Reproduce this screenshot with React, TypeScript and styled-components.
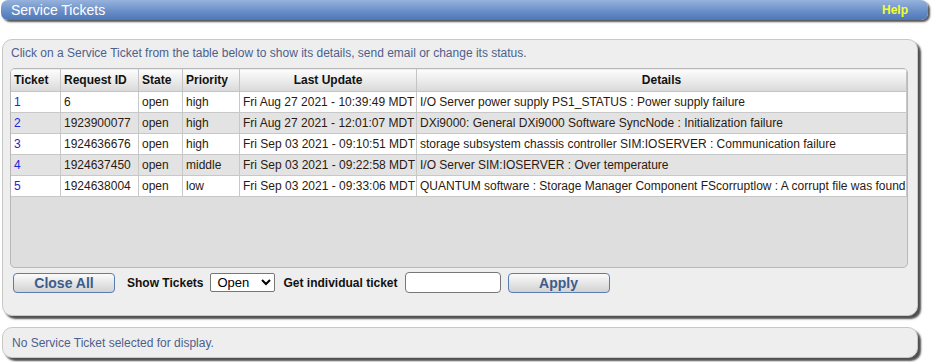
import React from 'react';
import styled, { createGlobalStyle } from 'styled-components';

const GlobalStyle = createGlobalStyle`
    body {
        margin: 0;
        background: #fff;
        font-family: "Liberation Sans", Arial, sans-serif;
        font-size: 12px;
    }
`;

const Page = styled.div`
    width: 932px;
    height: 362px;
    overflow: hidden;
    padding: 0 4px 0 1px;
    box-sizing: border-box;
`;

const TitleBar = styled.div`
    height: 20px;
    display: flex;
    align-items: center;
    justify-content: space-between;
    padding: 0 20px 0 10px;
    border-radius: 7px;
    background: linear-gradient(#97b3dc, #6a8fc8 55%, #4d77b6);
    box-shadow: 2px 2px 2px #555;
    color: #fff;
`;

const Title = styled.span`
    font-size: 14px;
`;

const HelpLink = styled.a`
    font-size: 12px;
    font-weight: bold;
    color: #f0ff30;
    text-decoration: none;
`;

const Panel = styled.div<{ $compact?: boolean }>`
    margin: ${p => (p.$compact ? '11px' : '19px')} 0 0 1px;
    width: 916px;
    box-sizing: border-box;
    background: #eeeeee;
    border: 1px solid #c8c8c8;
    border-radius: 10px;
    box-shadow: 3px 3px 2px #505050;
    padding: ${p => (p.$compact ? '8px 8px 7px' : '6px 7px 0')};
    height: ${p => (p.$compact ? '31px' : '277px')};
`;

const Note = styled.div`
    color: #4d5f8c;
    font-size: 12px;
    line-height: 15px;
    padding-left: 1px;
`;

const TableBox = styled.div`
    margin-top: 7px;
    width: 898px;
    height: 200px;
    box-sizing: border-box;
    border: 1px solid #b8b8b8;
    border-radius: 5px;
    background: #dedede;
    overflow: hidden;
`;

const Grid = styled.table`
    border-collapse: collapse;
    table-layout: fixed;
    width: 897px;
    margin: -1px 0 0 -1px;
`;

const HeadCell = styled.th<{ $w?: number; $center?: boolean }>`
    width: ${p => (p.$w ? `${p.$w - 7}px` : 'auto')};
    height: 22px;
    padding: 0 3px;
    text-align: ${p => (p.$center ? 'center' : 'left')};
    font-weight: bold;
    font-size: 12px;
    color: #111;
    background: linear-gradient(#fdfdfd, #e8e8e8 60%, #d8d8d8);
    border: 1px solid #c4c4c4;
    white-space: nowrap;
`;

const Row = styled.tr<{ $alt: boolean }>`
    background: ${p => (p.$alt ? '#e3e3e3' : '#ffffff')};
`;

const Cell = styled.td<{ $link?: boolean }>`
    height: 20px;
    padding: 0 3px;
    border: 1px solid #c8c8c8;
    font-size: 12px;
    color: ${p => (p.$link ? '#2424d6' : '#2a1a10')};
    white-space: nowrap;
    overflow: hidden;
`;

const Controls = styled.div`
    display: flex;
    align-items: center;
    margin-top: 4px;
    padding-left: 3px;
    height: 21px;
`;

const Button = styled.button`
    width: 102px;
    height: 20px;
    padding: 0;
    border: 1px solid #5a7db0;
    border-radius: 4px;
    background: linear-gradient(#fbfbfb, #e4e4e4 55%, #d2d2d2);
    color: #3d5b8c;
    font-family: "Liberation Sans", Arial, sans-serif;
    font-size: 14px;
    font-weight: bold;
`;

const Label = styled.span<{ $gap: number }>`
    font-weight: bold;
    font-size: 12px;
    color: #111;
    margin: 0 7px 0 ${p => p.$gap}px;
`;

const Select = styled.select`
    width: 65px;
    height: 19px;
    font-family: Arial, "Liberation Sans", sans-serif;
    font-size: 13px;
    border: 1px solid #777;
    border-radius: 2px;
    background: #fff;
    padding: 0 2px;
`;

const TextField = styled.input`
    width: 96px;
    height: 21px;
    box-sizing: border-box;
    border: 1px solid #777;
    border-radius: 4px;
    margin-right: 7px;
`;

const tickets = [
    ['1', '6', 'open', 'high', 'Fri Aug 27 2021 - 10:39:49 MDT', 'I/O Server power supply PS1_STATUS : Power supply failure'],
    ['2', '1923900077', 'open', 'high', 'Fri Aug 27 2021 - 12:01:07 MDT', 'DXi9000: General DXi9000 Software SyncNode : Initialization failure'],
    ['3', '1924636676', 'open', 'high', 'Fri Sep 03 2021 - 09:10:51 MDT', 'storage subsystem chassis controller SIM:IOSERVER : Communication failure'],
    ['4', '1924637450', 'open', 'middle', 'Fri Sep 03 2021 - 09:22:58 MDT', 'I/O Server SIM:IOSERVER : Over temperature'],
    ['5', '1924638004', 'open', 'low', 'Fri Sep 03 2021 - 09:33:06 MDT', 'QUANTUM software : Storage Manager Component FScorruptlow : A corrupt file was found'],
];

const App = () => (
    <Page>
        <GlobalStyle />
        <TitleBar>
            <Title>Service Tickets</Title>
            <HelpLink href="#">Help</HelpLink>
        </TitleBar>
        <Panel>
            <Note>Click on a Service Ticket from the table below to show its details, send email or change its status.</Note>
            <TableBox>
                <Grid>
                    <thead>
                        <tr>
                            <HeadCell $w={50}>Ticket</HeadCell>
                            <HeadCell $w={78}>Request ID</HeadCell>
                            <HeadCell $w={44}>State</HeadCell>
                            <HeadCell $w={57}>Priority</HeadCell>
                            <HeadCell $w={177} $center>Last Update</HeadCell>
                            <HeadCell $center>Details</HeadCell>
                        </tr>
                    </thead>
                    <tbody>
                        {tickets.map((t, i) => (
                            <Row key={t[0]} $alt={i % 2 === 1}>
                                <Cell $link>{t[0]}</Cell>
                                <Cell>{t[1]}</Cell>
                                <Cell>{t[2]}</Cell>
                                <Cell>{t[3]}</Cell>
                                <Cell>{t[4]}</Cell>
                                <Cell>{t[5]}</Cell>
                            </Row>
                        ))}
                    </tbody>
                </Grid>
            </TableBox>
            <Controls>
                <Button>Close All</Button>
                <Label $gap={12}>Show Tickets</Label>
                <Select defaultValue="open">
                    <option value="open">Open</option>
                    <option value="closed">Closed</option>
                    <option value="all">All</option>
                </Select>
                <Label $gap={8}>Get individual ticket</Label>
                <TextField />
                <Button>Apply</Button>
            </Controls>
        </Panel>
        <Panel $compact>
            <Note>No Service Ticket selected for display.</Note>
        </Panel>
    </Page>
);

export default App;
